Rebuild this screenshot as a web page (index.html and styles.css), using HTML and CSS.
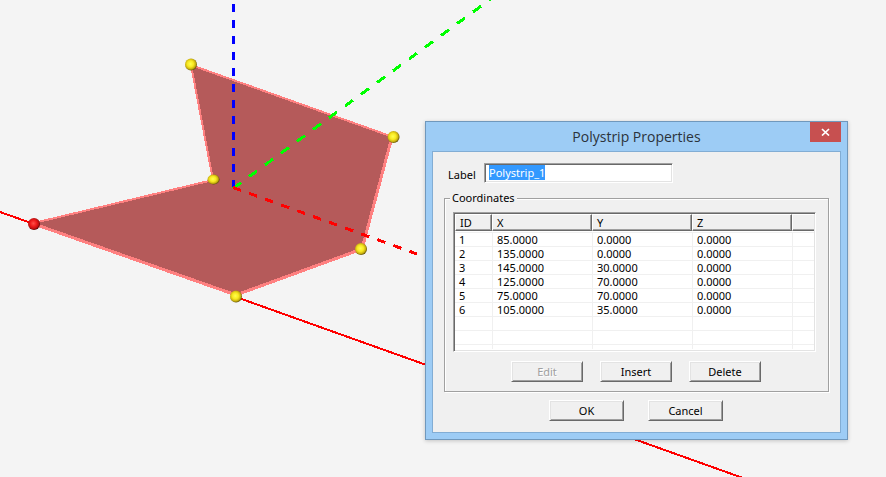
FILE: index.html
```html
<!DOCTYPE html>
<html lang="en">
<head>
<meta charset="utf-8">
<title>Polystrip Properties</title>
<link rel="stylesheet" href="styles.css">
</head>
<body>
<main class="workspace">
  <svg class="scene" viewBox="0 0 886 477" preserveAspectRatio="xMinYMin slice" aria-hidden="true">
    <defs>
      <radialGradient id="yellow-ball" cx="0.45" cy="0.45" r="0.58">
        <stop offset="0" stop-color="#ffff50"/>
        <stop offset="0.45" stop-color="#f8e820"/>
        <stop offset="0.75" stop-color="#c8b010"/>
        <stop offset="1" stop-color="#4a3c00"/>
      </radialGradient>
      <radialGradient id="red-ball" cx="0.45" cy="0.45" r="0.58">
        <stop offset="0" stop-color="#ff5048"/>
        <stop offset="0.45" stop-color="#f01c1c"/>
        <stop offset="0.75" stop-color="#c01010"/>
        <stop offset="1" stop-color="#400000"/>
      </radialGradient>
    </defs>
    <g shape-rendering="crispEdges" fill="none">
      <path d="M0 212L34 224M236 297L743 478" stroke="#f00" stroke-width="2"/>
      <path d="M191 65L393 137L361 249L236 296L34 224L213 180Z" fill="#b55a5a"/>
      <g stroke="#ff8080">
        <path d="M34 223L213 180L191 65L393 137" stroke-width="2"/>
        <path d="M392 137L362 249L236 295L34 224" stroke-width="3"/>
      </g>
      <path d="M233.500 4V188" stroke="#00f" stroke-width="3" stroke-dasharray="8 8"/>
      <path d="M233 188.500L492 -2" stroke="#0f0" stroke-width="3" stroke-dasharray="9.930 9.930"/>
      <path d="M233 187.500L417 254" stroke="#f00" stroke-width="3" stroke-dasharray="8.520 8.520"/>
    </g>
    <g fill="url(#yellow-ball)">
      <circle cx="191" cy="64.500" r="6"/>
      <circle cx="393.500" cy="137" r="6"/>
      <ellipse cx="213.500" cy="179.500" rx="6" ry="5"/>
      <circle cx="361" cy="249" r="6"/>
      <circle cx="236" cy="296.500" r="6"/>
      <circle cx="34" cy="224" r="6" fill="url(#red-ball)"/>
    </g>
  </svg>

  <form class="dialog" role="dialog" aria-labelledby="dialog-title">
    <header class="titlebar">
      <h1 class="title" id="dialog-title">Polystrip Properties</h1>
      <button class="close" type="button" aria-label="Close">
        <svg width="9" height="8" viewBox="0 0 9 8"><path d="M1 1L8 7.500M8 1L1 7.500" stroke="#fff" stroke-width="1.700"/></svg>
      </button>
    </header>
    <div class="client">
      <div class="field">
        <label for="strip-label">Label</label>
        <input class="textbox" id="strip-label" type="text" value="Polystrip_1" spellcheck="false" autocomplete="off">
      </div>
      <fieldset class="group">
        <legend>Coordinates</legend>
        <div class="list">
          <table>
            <colgroup><col class="col-id"><col class="col-axis"><col class="col-axis"><col class="col-axis"><col></colgroup>
            <thead>
              <tr><th><span>ID</span></th><th><span>X</span></th><th><span>Y</span></th><th><span>Z</span></th><th><span></span></th></tr>
            </thead>
            <tbody>
              <tr><td>1</td><td>85.0000</td><td>0.0000</td><td>0.0000</td><td></td></tr>
              <tr><td>2</td><td>135.0000</td><td>0.0000</td><td>0.0000</td><td></td></tr>
              <tr><td>3</td><td>145.0000</td><td>30.0000</td><td>0.0000</td><td></td></tr>
              <tr><td>4</td><td>125.0000</td><td>70.0000</td><td>0.0000</td><td></td></tr>
              <tr><td>5</td><td>75.0000</td><td>70.0000</td><td>0.0000</td><td></td></tr>
              <tr><td>6</td><td>105.0000</td><td>35.0000</td><td>0.0000</td><td></td></tr>
              <tr><td></td><td></td><td></td><td></td><td></td></tr>
              <tr><td></td><td></td><td></td><td></td><td></td></tr>
              <tr class="last"><td></td><td></td><td></td><td></td><td></td></tr>
            </tbody>
          </table>
        </div>
        <div class="actions edit-actions">
          <button class="button" type="button" disabled>Edit</button>
          <button class="button" type="button">Insert</button>
          <button class="button" type="button">Delete</button>
        </div>
      </fieldset>
      <div class="actions dialog-actions">
        <button class="button" type="submit">OK</button>
        <button class="button" type="button">Cancel</button>
      </div>
    </div>
  </form>
</main>
<script src="script.js"></script>
</body>
</html>
```
FILE: styles.css
```css
* {
  box-sizing: border-box;
}

body {
  margin: 0;
  background: #f4f4f4;
  color: #000;
  font: 11px/14px "Noto Sans", Tahoma, sans-serif;
}

.workspace {
  position: relative;
  height: 100vh;
  overflow: hidden;
}

.scene {
  display: block;
  width: 100%;
  height: 100%;
}

.dialog {
  position: absolute;
  left: 425px;
  top: 121px;
  width: 423px;
  padding: 0 6px 6px;
  border: 1px solid #7098bc;
  background: #9dccf5;
  box-shadow: 0 1px 4px rgba(0, 0, 0, 0.2);
}

.titlebar {
  display: grid;
  grid-template-columns: 31px 1fr 31px;
  height: 29px;
}

.title {
  grid-column: 2;
  margin: 0;
  color: #2b333b;
  font: 14px/30px "Open Sans", "Segoe UI", sans-serif;
  text-align: center;
}

.close {
  display: flex;
  align-items: center;
  justify-content: center;
  height: 20px;
  padding: 0;
  border: 0;
  background: #c75050;
}

.client {
  padding: 11px;
  padding-bottom: 10px;
  border: 1px solid #82add4;
  background: #f0f0f0;
}

.field {
  display: flex;
  align-items: center;
  padding-left: 4px;
}

.field label {
  width: 36px;
  padding-top: 4px;
}

.textbox {
  width: 189px;
  height: 20px;
  padding: 0 4px 2px;
  border: 1px solid;
  border-color: #a0a0a0 #fff #fff #a0a0a0;
  background: #fff;
  box-shadow: inset 1px 1px #696969, inset -1px -1px #e3e3e3;
  font: inherit;
  outline: 0;
}

.textbox::selection {
  background: #3399ff;
  color: #fff;
}

.group {
  min-width: 0;
  margin: 8px 0 0;
  padding: 7px 12px 9px 8px;
  border: 1px solid #a0a0a0;
  box-shadow: 1px 1px #fff, inset 1px 1px #fff;
}

.group legend {
  margin-left: -3px;
  padding: 0 2px;
  background: #f0f0f0;
}

.list {
  height: 140px;
  overflow: hidden;
  border: 1px solid;
  border-color: #a0a0a0 #fff #fff #a0a0a0;
  padding: 1px;
  background: #fff;
  box-shadow: inset 1px 1px #696969, inset -1px -1px #e3e3e3;
}

.list table {
  width: 100%;
  table-layout: fixed;
  border-collapse: separate;
  border-spacing: 0;
}

.col-id {
  width: 37px;
}

.col-axis {
  width: 100px;
}

.list th {
  padding: 0 0 1px;
  border-bottom: 1px solid #f0f0f0;
  font-weight: normal;
  text-align: left;
}

.list th span {
  display: block;
  height: 17px;
  padding: 1px 0 0 4px;
  border: 1px solid;
  border-color: #fff #696969 #696969 #fff;
  background: #f0f0f0;
  box-shadow: inset -1px -1px #a0a0a0;
}

.list th:last-child span {
  border-right: 0;
  box-shadow: inset 0 -1px #a0a0a0;
}

.list td {
  height: 14px;
  padding: 0 4px;
  border-bottom: 1px solid #f0f0f0;
  line-height: 13px;
}

.list td + td {
  border-left: 1px solid #f0f0f0;
}

.list .last td {
  height: 4px;
  border-bottom: 0;
}

.actions {
  display: flex;
  justify-content: center;
}

.edit-actions {
  gap: 17px;
  margin-top: 9px;
  padding-left: 3px;
}

.dialog-actions {
  gap: 24px;
  margin-top: 8px;
  padding: 0 1px 1px 0;
}

.button {
  width: 72px;
  height: 21px;
  padding: 0;
  border: 1px solid;
  border-color: #fff #696969 #696969 #fff;
  background: #f0f0f0;
  box-shadow: inset 1px 1px #e3e3e3, inset -1px -1px #a0a0a0;
  color: #000;
  font: inherit;
}

.dialog-actions .button {
  width: 75px;
}

.button:disabled {
  color: #a0a0a0;
  text-shadow: 1px 1px #fff;
}
```
FILE: script.js
```js
const labelInput = document.getElementById("strip-label");
labelInput.focus();
labelInput.select();
```
